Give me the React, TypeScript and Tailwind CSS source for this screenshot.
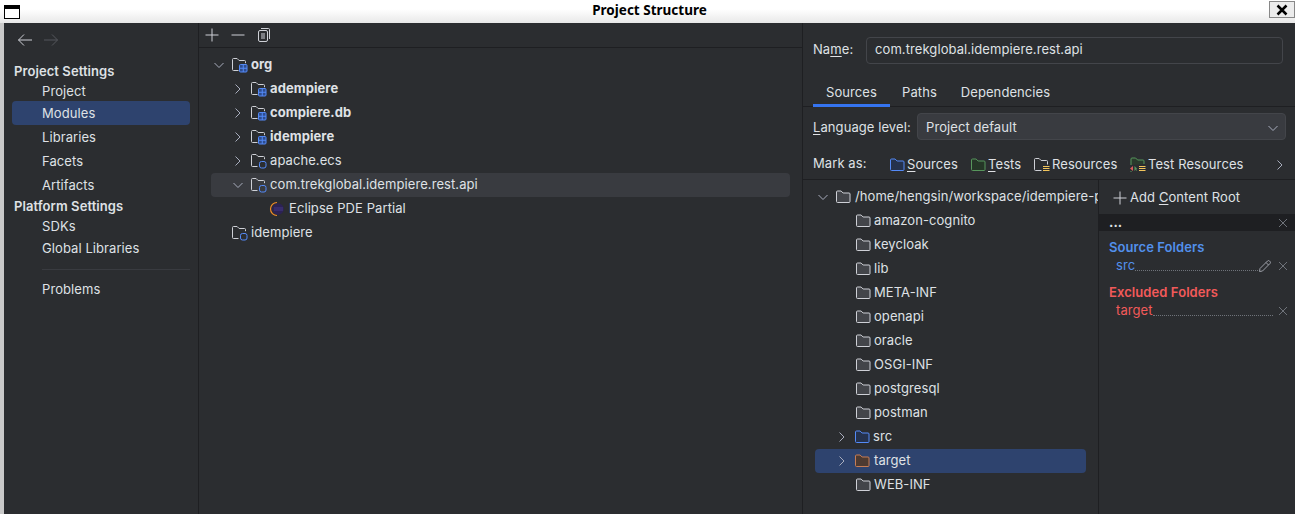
import type { ReactNode } from 'react';

const Line = ({ d, size = 16, color = '#ced0d6', className = '' }: { d: string; size?: number; color?: string; className?: string }) => (
  <svg width={size} height={size} viewBox={`0 0 ${size} ${size}`} fill="none" className={`shrink-0 ${className}`}>
    <path d={d} stroke={color} />
  </svg>
);

const PLUS = 'M8 1.500v13M1.500 8h13';
const MINUS = 'M1.500 8h13';
const BACK = 'M15 8H1.500M7 2.500 1.500 8 7 13.500';
const FORWARD = 'M1 8h13.500M9 2.500 14.500 8 9 13.500';
const CROSS = 'M3 3l8 8M11 3l-8 8';

const ModuleFolder = ({ grouped }: { grouped?: boolean }) => (
  <svg width="18" height="16" viewBox="0 0 18 16" fill="none" className="shrink-0">
    <path d="M7.500 13.500H2.500a1 1 0 0 1-1-1V2.500a1 1 0 0 1 1-1h3.600l2 2h5.400a1 1 0 0 1 1 1v1.700" stroke="#ced0d6" />
    {grouped ? (
      <>
        <rect x="8.500" y="7.500" width="7.500" height="7.500" rx="1" fill="#2e4d8f" stroke="#548af7" />
        <path d="M12.250 7.500v7.500M8.500 11.250h7.500" stroke="#548af7" />
      </>
    ) : (
      <rect x="9.500" y="8.500" width="6.500" height="6.500" rx="2" stroke="#548af7" />
    )}
  </svg>
);

const EclipseIcon = () => (
  <svg width="16" height="16" viewBox="0 0 16 16" className="shrink-0">
    <circle cx="9" cy="8" r="5.800" fill="#2c2255" />
    <path d="M8 1.500a6.500 6.500 0 0 0 0 13" fill="none" stroke="#f28c28" strokeWidth="1.200" />
    <path d="M5 7h9M5 9h9" stroke="#4b3f8f" strokeWidth="0.800" />
  </svg>
);

const Folder = ({ stroke = '#ced0d6', fill = '#43454a' }: { stroke?: string; fill?: string }) => (
  <svg width="16" height="16" viewBox="0 0 16 16" className="shrink-0">
    <path d="M1.500 3a1 1 0 0 1 1-1h3.600l2 2h5.900a1 1 0 0 1 1 1v7.500a1 1 0 0 1-1 1h-11.500a1 1 0 0 1-1-1z" fill={fill} stroke={stroke} />
  </svg>
);

const ResourceFolder = ({ stroke }: { stroke: string }) => (
  <svg width="16" height="16" viewBox="0 0 16 16" fill="none" className="shrink-0">
    <path d="M7.500 13.500H1.500a1 1 0 0 1-1-1V2.500a1 1 0 0 1 1-1h3.600l2 2h5.400a1 1 0 0 1 1 1v3" stroke={stroke} />
    <path d="M9 9.500h6.500M9 11.500h6.500M9 13.500h6.500" stroke="#f2c55c" />
  </svg>
);

const TestResourceFolder = () => (
  <svg width="16" height="18" viewBox="0 0 16 18" fill="none" className="shrink-0">
    <path d="M1 9V3a1 1 0 0 1 1-1h3.600l2 2h5.400a1 1 0 0 1 1 1v3" fill="#2a3a2c" stroke="#57965c" />
    <path d="M1 16V15M6 14H7" stroke="#57965c" />
    <path d="M0 12.500 3 10v5z" fill="#db5c5c" />
    <path d="M7 12.500 4.500 10v5z" fill="#57965c" />
    <path d="M9 10.500h6.500M9 12.500h6.500M9 14.500h6.500" stroke="#f2c55c" />
  </svg>
);

const Copy = () => (
  <svg width="16" height="16" viewBox="0 0 16 16" fill="none" className="shrink-0">
    <rect x="2.500" y="3.500" width="9" height="11" rx="1.500" stroke="#ced0d6" />
    <path d="M5 1.500h7.500a1 1 0 0 1 1 1V12" stroke="#ced0d6" />
    <path d="M5 7h4M5 9h4M5 11h4" stroke="#ced0d6" />
  </svg>
);

const Pencil = () => (
  <svg width="14" height="14" viewBox="0 0 14 14" fill="none" className="mr-[4px] shrink-0">
    <path d="M1.500 12.500 2 9.500 9.500 2a1.400 1.400 0 0 1 2 0l.5.500a1.400 1.400 0 0 1 0 2L4.500 12zM8 3.500 10.500 6" stroke="#9da0a8" />
  </svg>
);

const sideItems = ['Libraries', 'Facets', 'Artifacts'];

const moduleRows = [
  { label: 'adempiere', grouped: true },
  { label: 'compiere.db', grouped: true },
  { label: 'idempiere', grouped: true },
  { label: 'apache.ecs', grouped: false },
];

const contentFolders = ['amazon-cognito', 'keycloak', 'lib', 'META-INF', 'openapi', 'oracle', 'OSGI-INF', 'postgresql', 'postman'];

const Chevron = ({ open }: { open?: boolean }) => (
  <Line size={14} color="#a8adbd" d={open ? 'M2.500 5 7 9.500 11.500 5' : 'M4.500 2.500 9 7l-4.500 4.500'} />
);

const Mark = ({ icon, children, className }: { icon: ReactNode; children: ReactNode; className: string }) => (
  <span className={`flex items-center gap-[2px] ${className}`}>
    {icon}
    <span>{children}</span>
  </span>
);

export default function App() {
  return (
    <div className="flex h-[514px] w-[1295px] flex-col overflow-hidden bg-[#2b2d30] text-[13px] tracking-[0.08px] text-[#dfe1e5] [font-family:Inter,'Liberation_Sans',sans-serif]">
      <div className="flex h-[23px] shrink-0 items-center justify-between bg-gradient-to-b from-white from-40% to-[#e8e8e8] pl-1">
        <div className="flex h-[14px] w-4 flex-col border border-black bg-white">
          <div className="h-[3px] bg-black" />
        </div>
        <div className="pb-[2px] pl-[10px] text-[13.500px] font-bold tracking-normal text-black [font-family:'Noto_Sans',sans-serif]">Project Structure</div>
        <div className="mb-[4px] flex h-[17px] w-[26px] items-center justify-center border border-[#888] bg-[#ececec]">
          <svg width="12" height="12" viewBox="0 0 12 12" fill="none">
            <path d="M1.500 1.500l9 9M10.500 1.500l-9 9" stroke="#000" strokeWidth="2.500" />
          </svg>
        </div>
      </div>

      <div className="flex min-h-0 flex-1">
        <div className="w-1 shrink-0 bg-[#c9c9c9]" />

        {/* sidebar */}
        <div className="flex w-[195px] shrink-0 flex-col border-r border-[#1e1f22]">
          <div className="flex h-[37px] shrink-0 items-center gap-[10px] pb-[3px] pl-[13px]">
            <Line d={BACK} />
            <Line d={FORWARD} color="#55575c" />
          </div>
          <div className="flex h-[24px] shrink-0 items-center pl-[10px] font-semibold">Project Settings</div>
          <div className="flex h-[17px] shrink-0 items-center pb-[2px] pl-[38px]">Project</div>
          <div className="ml-2 flex h-[24px] w-[178px] shrink-0 items-center rounded-[4px] bg-[#2e436e] pl-[30px] pt-[2px]">Modules</div>
          {sideItems.map(s => (
            <div key={s} className="flex h-[24px] shrink-0 items-center pl-[38px] pt-[2px]">{s}</div>
          ))}
          <div className="flex h-[18px] shrink-0 items-center pl-[10px] pt-[2px] font-semibold">Platform Settings</div>
          <div className="flex h-[22px] shrink-0 items-center pl-[38px] pt-[2px]">SDKs</div>
          <div className="flex h-[22px] shrink-0 items-center pl-[38px] pt-[2px]">Global Libraries</div>
          <div className="mb-[9px] ml-[38px] mr-[8px] mt-[10px] h-px shrink-0 bg-[#393b40]" />
          <div className="flex h-[20px] shrink-0 items-center pl-[38px] pt-[2px]">Problems</div>
        </div>

        {/* modules tree */}
        <div className="flex w-[604px] shrink-0 flex-col border-r border-[#1e1f22]">
          <div className="flex h-[25px] shrink-0 items-center gap-[10px] border-b border-[#1e1f22] pl-[5px]">
            <Line d={PLUS} />
            <Line d={MINUS} />
            <Copy />
          </div>
          <div className="flex flex-col pt-[5px]">
            <div className="flex h-[24px] items-center pl-[13px] font-bold">
              <Chevron open />
              <span className="ml-[5px] mr-[2px] flex"><ModuleFolder grouped /></span>
              org
            </div>
            {moduleRows.map(r => (
              <div key={r.label} className={`flex h-[24px] items-center pl-[32px] ${r.grouped ? 'font-bold' : ''}`}>
                <Chevron />
                <span className="ml-[5px] mr-[2px] flex"><ModuleFolder grouped={r.grouped} /></span>
                {r.label}
              </div>
            ))}
            <div className="ml-3 flex h-[24px] w-[579px] items-center rounded-[4px] bg-[#393b40] pl-[20px]">
              <Chevron open />
              <span className="ml-[5px] mr-[2px] flex"><ModuleFolder /></span>
              com.trekglobal.idempiere.rest.api
            </div>
            <div className="flex h-[24px] items-center gap-[4px] pl-[70px]">
              <EclipseIcon />
              Eclipse PDE Partial
            </div>
            <div className="flex h-[24px] items-center pl-[32px]">
              <ModuleFolder />
              <span className="ml-[2px]">idempiere</span>
            </div>
          </div>
        </div>

        {/* module details */}
        <div className="flex min-w-0 flex-1 flex-col">
          <div className="flex h-[54px] shrink-0 items-center pl-[10px] pr-3">
            <span className="w-[53px]">Na<span className="underline underline-offset-2">m</span>e:</span>
            <div className="flex h-[27px] flex-1 items-center rounded-[4px] border border-[#43454a] bg-[#2b2d30] pl-2">com.trekglobal.idempiere.rest.api</div>
          </div>
          <div className="flex h-[30px] shrink-0 border-b border-[#1e1f22] pl-[10px]">
            <div className="flex h-[30px] w-[77px] items-center justify-center border-b-[3px] border-[#3574f0] pt-[4px]">Sources</div>
            <div className="flex w-[59px] items-center justify-center pt-[2px]">Paths</div>
            <div className="flex w-[113px] items-center justify-center pt-[2px]">Dependencies</div>
          </div>
          <div className="flex h-[37px] shrink-0 items-start pl-[10px] pr-[9px] pt-[6px]">
            <span className="flex h-[27px] w-[104px] items-center pt-[2px]"><span><span className="underline underline-offset-2">L</span>anguage level:</span></span>
            <div className="flex h-[27px] flex-1 items-center justify-between rounded-[4px] border border-[#43454a] bg-[#393b40] pl-2 pr-[5px] pt-[2px]">
              Project default
              <Chevron open />
            </div>
          </div>
          <div className="flex h-[36px] shrink-0 items-center border-b border-[#1e1f22] pl-[10px] pr-[8px] pt-[6px]">
            <span className="w-[76px] pb-[2px]">Mark as:</span>
            <div className="flex flex-1 items-center pt-[1px]">
              <Mark className="w-[81px]" icon={<Folder stroke="#548af7" fill="#25324d" />}><span className="underline underline-offset-2">S</span>ources</Mark>
              <Mark className="w-[64px]" icon={<Folder stroke="#57965c" fill="#253627" />}><span className="underline underline-offset-2">T</span>ests</Mark>
              <Mark className="w-[96px]" icon={<ResourceFolder stroke="#ced0d6" />}>Resources</Mark>
              <Mark className="w-[135px]" icon={<TestResourceFolder />}>Test Resources</Mark>
            </div>
            <Chevron />
          </div>

          <div className="flex min-h-0 flex-1">
            <div className="flex w-[296px] shrink-0 flex-col border-r border-[#1e1f22] pt-[5px]">
              <div className="flex h-[24px] shrink-0 items-center overflow-hidden whitespace-nowrap pl-[13px]">
                <Chevron open />
                <span className="ml-[5px] mr-[4px] flex"><Folder /></span>
                /home/hengsin/workspace/idempiere-p
              </div>
              {contentFolders.map(f => (
                <div key={f} className="flex h-[24px] shrink-0 items-center gap-[3px] pl-[52px]">
                  <Folder />
                  {f}
                </div>
              ))}
              <div className="flex h-[24px] shrink-0 items-center pl-[32px]">
                <Chevron />
                <span className="ml-[5px] mr-[3px] flex"><Folder stroke="#548af7" fill="#25324d" /></span>
                src
              </div>
              <div className="ml-3 flex h-[24px] w-[271px] shrink-0 items-center rounded-[4px] bg-[#2e436e] pl-[20px]">
                <Chevron />
                <span className="ml-[5px] mr-[4px] flex"><Folder stroke="#c77d55" fill="#4d3a31" /></span>
                target
              </div>
              <div className="flex h-[24px] shrink-0 items-center gap-[3px] pl-[52px]">
                <Folder />
                WEB-INF
              </div>
            </div>

            <div className="flex min-w-0 flex-1 flex-col">
              <div className="flex h-[34px] shrink-0 items-center gap-[2px] pl-[13px] pt-[2px]">
                <Line d={PLUS} />
                <span>Add <span className="underline underline-offset-2">C</span>ontent Root</span>
              </div>
              <div className="flex h-[17px] shrink-0 items-center justify-between bg-[#1e1f22] pl-[10px] pr-[5px]">
                <span className="font-bold leading-none">...</span>
                <Line size={14} d={CROSS} color="#6f737a" />
              </div>
              <div className="flex h-[26px] shrink-0 items-end pl-[10px] font-semibold text-[#5290ec]">Source Folders</div>
              <div className="flex h-[18px] shrink-0 items-center pl-[17px] pr-[5px] text-[#5290ec]">
                src
                <span className="mb-[-9px] h-px flex-1 border-b border-dotted border-[#6f737a]" />
                <Pencil />
                <Line size={14} d={CROSS} color="#6f737a" />
              </div>
              <div className="flex h-[27px] shrink-0 items-end pl-[10px] font-semibold text-[#f25a5a]">Excluded Folders</div>
              <div className="flex h-[18px] shrink-0 items-center pl-[17px] pr-[5px] text-[#f25a5a]">
                target
                <span className="mb-[-9px] mr-[3px] h-px flex-1 border-b border-dotted border-[#6f737a]" />
                <Line size={14} d={CROSS} color="#6f737a" />
              </div>
            </div>
          </div>
        </div>
      </div>
    </div>
  );
}
